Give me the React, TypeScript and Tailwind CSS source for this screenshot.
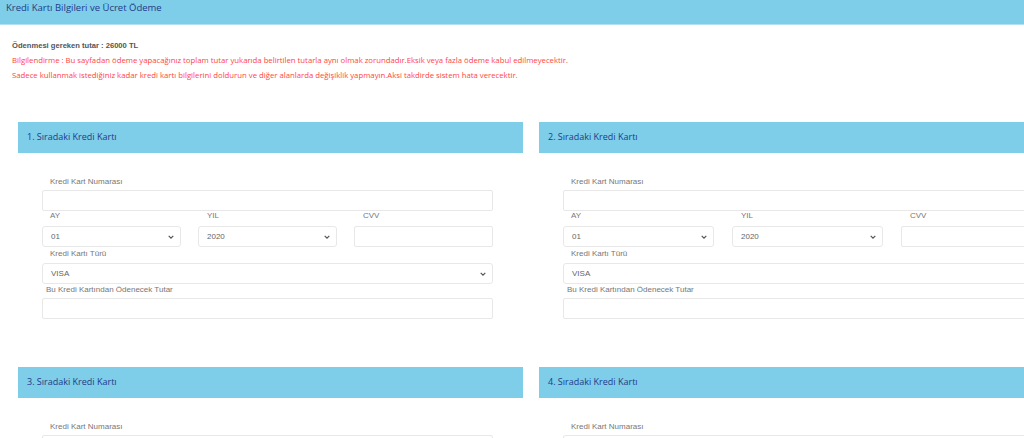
import React from "react";

const OPEN = { fontFamily: '"Open Sans", "Noto Sans", sans-serif' };
const ARIAL = { fontFamily: '"Liberation Sans", Arial, sans-serif' };

function Chevron() {
  return (
    <svg width="6" height="4" viewBox="0 0 6 4" className="shrink-0">
      <path d="M0.7 0.8 L3 3.1 L5.3 0.8" fill="none" stroke="#555" strokeWidth="1.2" />
    </svg>
  );
}

function Sel({ value, w }: { value: string; w: string }) {
  return (
    <div
      className={`${w} h-[21px] border border-[#e8e8e8] rounded-[3px] bg-white flex items-center justify-between pl-[8px] pr-[6px] text-[8px] text-[#666]`}
      style={ARIAL}
    >
      <span>{value}</span>
      <Chevron />
    </div>
  );
}

function Inp({ w }: { w: string }) {
  return <div className={`${w} h-[21px] border border-[#e8e8e8] rounded-[2px] bg-white`} />;
}

function Label({ children, cls }: { children: React.ReactNode; cls: string }) {
  return (
    <div className={`h-[10px] leading-[10px] text-[8px] text-[#777] ${cls}`} style={ARIAL}>
      {children}
    </div>
  );
}

function Card({ n, wide, short }: { n: number; wide: boolean; short?: boolean }) {
  const hw = wide ? "w-[545px]" : "w-[505px]";
  const fw = wide ? "w-[489px]" : "w-[451px]";
  const cw = wide ? "w-[151px]" : "w-[139px]";
  const gap = wide ? "gap-[18px]" : "gap-[17px]";
  return (
    <div className={`${hw} shrink-0`}>
      <div
        className="h-[31px] bg-[#7ecde9] flex items-center pl-[9px] pb-[1px] text-[9px] text-[#1f3c88]"
        style={OPEN}
      >
        {n}. Sıradaki Kredi Kartı
      </div>
      <div className="pl-[24px] pt-[24px]">
        <Label cls="pl-[8px]">Kredi Kart Numarası</Label>
        <div className="mt-[3px]">
          <Inp w={fw} />
        </div>
        {!short && (
          <>
            <div className={`flex ${gap}`}>
              <div className={cw}>
                <Label cls="pl-[8px]">AY</Label>
                <div className="mt-[5px]">
                  <Sel value="01" w={cw} />
                </div>
              </div>
              <div className={cw}>
                <Label cls="pl-[9px]">YIL</Label>
                <div className="mt-[5px]">
                  <Sel value="2020" w={cw} />
                </div>
              </div>
              <div className={cw}>
                <Label cls="pl-[9px]">CVV</Label>
                <div className="mt-[5px]">
                  <Inp w={cw} />
                </div>
              </div>
            </div>
            <div className="mt-[2px]">
              <Label cls="pl-[8px]">Kredi Kartı Türü</Label>
            </div>
            <div className="mt-[4px]">
              <Sel value="VISA" w={fw} />
            </div>
            <div className="mt-[1px]">
              <Label cls="pl-[4px]">Bu Kredi Kartından Ödenecek Tutar</Label>
            </div>
            <div className="mt-[3px]">
              <Inp w={fw} />
            </div>
          </>
        )}
      </div>
    </div>
  );
}

export default function App() {
  return (
    <div className="w-[1024px] h-[438px] overflow-hidden bg-white">
      <div
        className="h-[25px] bg-[#7ecde9] border-b border-[#b3e0f2] pl-[6px] pt-[1px] leading-[13px] text-[9.5px] text-[#1f3c88]"
        style={OPEN}
      >
        Kredi Kartı Bilgileri ve Ücret Ödeme
      </div>
      <div className="pl-[12px] pt-[13px]">
        <div className="h-[15px] leading-[15px] text-[7.6px] font-bold text-[#555]" style={ARIAL}>
          Ödenmesi gereken tutar : 26000 TL
        </div>
        <div className="h-[15px] leading-[15px] text-[7.75px] text-[#ff4545]" style={OPEN}>
          Bilgilendirme : Bu sayfadan ödeme yapacağınız toplam tutar yukarıda belirtilen tutarla aynı olmak zorundadır.Eksik veya fazla ödeme kabul edilmeyecektir.
        </div>
        <div className="h-[15px] leading-[15px] text-[7.75px] text-[#ff4545]" style={OPEN}>
          Sadece kullanmak istediğiniz kadar kredi kartı bilgilerini doldurun ve diğer alanlarda değişiklik yapmayın.Aksi takdirde sistem hata verecektir.
        </div>
      </div>
      <div className="pl-[18px] pt-[39px] flex gap-[16px]">
        <Card n={1} wide={false} />
        <Card n={2} wide={true} />
      </div>
      <div className="pl-[18px] pt-[48px] flex gap-[16px]">
        <Card n={3} wide={false} short />
        <Card n={4} wide={true} short />
      </div>
    </div>
  );
}
